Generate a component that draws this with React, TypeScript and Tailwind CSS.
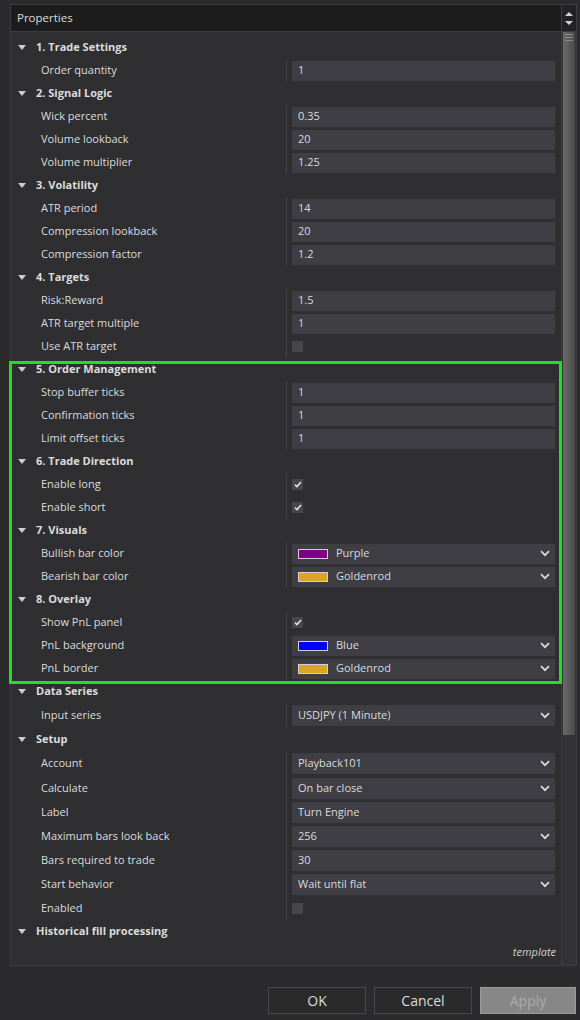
import React from 'react'

type Item =
  | { kind: 'text'; label: string; value: string }
  | { kind: 'select'; label: string; value: string; swatch?: string }
  | { kind: 'check'; label: string; checked: boolean }

type Section = { title: string; items: Item[]; tall?: boolean }

const sections: Section[] = [
  { title: '1. Trade Settings', items: [{ kind: 'text', label: 'Order quantity', value: '1' }] },
  {
    title: '2. Signal Logic',
    items: [
      { kind: 'text', label: 'Wick percent', value: '0.35' },
      { kind: 'text', label: 'Volume lookback', value: '20' },
      { kind: 'text', label: 'Volume multiplier', value: '1.25' },
    ],
  },
  {
    title: '3. Volatility',
    items: [
      { kind: 'text', label: 'ATR period', value: '14' },
      { kind: 'text', label: 'Compression lookback', value: '20' },
      { kind: 'text', label: 'Compression factor', value: '1.2' },
    ],
  },
  {
    title: '4. Targets',
    items: [
      { kind: 'text', label: 'Risk:Reward', value: '1.5' },
      { kind: 'text', label: 'ATR target multiple', value: '1' },
      { kind: 'check', label: 'Use ATR target', checked: false },
    ],
  },
  {
    title: '5. Order Management',
    items: [
      { kind: 'text', label: 'Stop buffer ticks', value: '1' },
      { kind: 'text', label: 'Confirmation ticks', value: '1' },
      { kind: 'text', label: 'Limit offset ticks', value: '1' },
    ],
  },
  {
    title: '6. Trade Direction',
    items: [
      { kind: 'check', label: 'Enable long', checked: true },
      { kind: 'check', label: 'Enable short', checked: true },
    ],
  },
  {
    title: '7. Visuals',
    items: [
      { kind: 'select', label: 'Bullish bar color', value: 'Purple', swatch: '#800080' },
      { kind: 'select', label: 'Bearish bar color', value: 'Goldenrod', swatch: '#daa520' },
    ],
  },
  {
    title: '8. Overlay',
    items: [
      { kind: 'check', label: 'Show PnL panel', checked: true },
      { kind: 'select', label: 'PnL background', value: 'Blue', swatch: '#0000ff' },
      { kind: 'select', label: 'PnL border', value: 'Goldenrod', swatch: '#daa520' },
    ],
  },
  {
    title: 'Data Series',
    tall: true,
    items: [{ kind: 'select', label: 'Input series', value: 'USDJPY (1 Minute)' }],
  },
  {
    title: 'Setup',
    tall: true,
    items: [
      { kind: 'select', label: 'Account', value: 'Playback101' },
      { kind: 'select', label: 'Calculate', value: 'On bar close' },
      { kind: 'text', label: 'Label', value: 'Turn Engine' },
      { kind: 'select', label: 'Maximum bars look back', value: '256' },
      { kind: 'text', label: 'Bars required to trade', value: '30' },
      { kind: 'select', label: 'Start behavior', value: 'Wait until flat' },
      { kind: 'check', label: 'Enabled', checked: false },
    ],
  },
  { title: 'Historical fill processing', items: [] },
]

function Caret() {
  return (
    <svg width="8" height="5" viewBox="0 0 8 5" className="shrink-0">
      <path d="M0 0 H8 L4 5 Z" fill="#cfcfcf" />
    </svg>
  )
}

function Chevron() {
  return (
    <svg width="10" height="7" viewBox="0 0 10 7" className="shrink-0">
      <path d="M1 1.2 L5 5.2 L9 1.2" fill="none" stroke="#d8d8d8" strokeWidth="1.8" />
    </svg>
  )
}

function Value({ item, tall }: { item: Item; tall?: boolean }) {
  const box = `flex w-full items-center bg-[#3e3e44] pl-[6px] pr-[5px] ${tall ? 'h-[21px]' : 'h-[20px]'}`
  if (item.kind === 'check') {
    return (
      <div className="flex h-[11px] w-[11px] items-center justify-center bg-[#46464c]">
        {item.checked ? (
          <svg width="8" height="7" viewBox="0 0 8 7">
            <path d="M1 3.6 L3 5.6 L7 1" fill="none" stroke="#e6e6e6" strokeWidth="1.5" />
          </svg>
        ) : null}
      </div>
    )
  }
  if (item.kind === 'select') {
    return (
      <div className={box}>
        {item.swatch ? (
          <span
            className="mr-[8px] h-[10px] w-[30px] shrink-0 border border-[#d9c9e0]"
            style={{ backgroundColor: item.swatch }}
          />
        ) : null}
        <span className="flex-1 truncate">{item.value}</span>
        <Chevron />
      </div>
    )
  }
  return (
    <div className={box}>
      <span>{item.value}</span>
    </div>
  )
}

export default function App() {
  return (
    <div
      className="relative h-[1020px] w-[580px] overflow-hidden bg-[#2b2b2e] text-[11px] text-[#dcdcdc]"
      style={{ fontFamily: '"Open Sans", "Noto Sans", sans-serif' }}
    >
      <div className="ml-[10px] mt-[4px] flex h-[962px] w-[567px] flex-col border border-[#3d3d40]">
        {/* title bar */}
        <div className="flex h-[27px] shrink-0 border-b border-[#3d3d40]">
          <div className="flex flex-1 items-center bg-[#1d1d1e] pl-[6px] text-[11.5px]">Properties</div>
          <div className="flex w-[15px] flex-col items-center justify-center gap-[5px] border-l border-[#3d3d40] bg-[#222224]">
            <svg width="8" height="4" viewBox="0 0 8 4">
              <path d="M0 4 H8 L4 0 Z" fill="#d0d0d0" />
            </svg>
            <svg width="8" height="4" viewBox="0 0 8 4">
              <path d="M0 0 H8 L4 4 Z" fill="#d0d0d0" />
            </svg>
          </div>
        </div>

        <div className="flex min-h-0 flex-1">
          {/* property grid */}
          <div className="flex flex-1 flex-col bg-[#2f2f32] pt-[4px]">
            {sections.map((s, i) => (
              <div key={s.title}>
                <div className={`flex items-center pl-[7px] ${s.tall && i > 8 ? 'h-[24px]' : 'h-[23px]'}`}>
                  <Caret />
                  <span className="ml-[10px] font-bold">{s.title}</span>
                </div>
                {s.items.map((it, j) => (
                  <div
                    key={it.label}
                    className={`flex ${s.tall ? (i > 8 && j === 0 ? 'h-[25px]' : 'h-[24px]') : 'h-[23px]'}`}
                  >
                    <div className="flex w-[275px] items-center pl-[30px]">{it.label}</div>
                    <div className="flex flex-1 items-center border-l border-[#434347] pl-[5px] pr-[6px]">
                      <Value item={it} tall={s.tall} />
                    </div>
                  </div>
                ))}
              </div>
            ))}
            <div className="flex-1" />
            <div className="pb-[5px] pr-[5px] text-right italic text-[#cfcfcf]">template</div>
          </div>

          {/* scrollbar */}
          <div className="flex w-[15px] flex-col border-l border-[#3d3d40] bg-[#333336] px-[1px]">
            <div className="relative h-[703px] bg-gradient-to-r from-[#6b6b6b] to-[#4a4a4a]">
              <div className="absolute right-[2px] top-[2px] h-px w-[8px] bg-[#8a8a8a]" />
              <div className="absolute right-[2px] top-[5px] h-px w-[8px] bg-[#8a8a8a]" />
              <div className="absolute right-[2px] top-[8px] h-px w-[8px] bg-[#8a8a8a]" />
            </div>
          </div>
        </div>
      </div>

      {/* buttons */}
      <div className="mt-[21px] flex justify-end gap-[8px] pr-[4px] text-[14px]">
        <button className="h-[27px] w-[98px] border border-[#4a4a4c] bg-[#2a2a2b] text-[#dcdcdc]">OK</button>
        <button className="h-[27px] w-[98px] border border-[#4a4a4c] bg-[#2a2a2b] text-[#dcdcdc]">Cancel</button>
        <button className="h-[27px] w-[96px] border border-[#9a9a9a] bg-[#878787] text-[#ababab]">Apply</button>
      </div>

      {/* highlight annotation */}
      <div className="pointer-events-none absolute left-[9px] top-[361px] h-[323px] w-[553px] border-[3px] border-[#1fe21f]" />
    </div>
  )
}
